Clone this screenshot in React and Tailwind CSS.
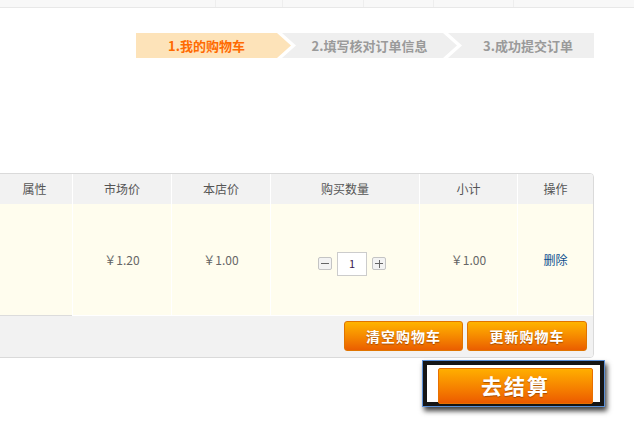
export default function App() {
  const font = { fontFamily: '"Noto Sans CJK SC", "Liberation Sans", sans-serif' };

  const cols = [
    { label: '属性', value: '' },
    { label: '市场价', value: '￥1.20' },
    { label: '本店价', value: '￥1.00' },
    { label: '购买数量', value: 'qty' },
    { label: '小计', value: '￥1.00' },
    { label: '操作', value: 'del' },
  ];

  return (
    <div className="w-[634px] h-[424px] bg-white overflow-hidden" style={font}>
      {/* top strip */}
      <div className="h-[8px] bg-[#f8f8f8] border-b border-[#e8e8e8] flex">
        <div className="w-[216px] border-r border-[#eeeeee]" />
        <div className="w-[67px] border-r border-[#eeeeee]" />
        <div className="w-[81px] border-r border-[#eeeeee]" />
        <div className="w-[70px] border-r border-[#eeeeee]" />
        <div className="w-[80px] border-r border-[#eeeeee]" />
      </div>

      {/* steps */}
      <div className="flex justify-end pr-[40px] mt-[25px]">
        <div className="flex h-[25px] w-[458px]">
          <div className="w-[155px] shrink-0 bg-[#fde3b9] pr-[14px] flex items-center justify-center text-[13px] font-bold text-[#ff6a00] [clip-path:polygon(0_0,141px_0,100%_50%,141px_100%,0_100%)]">
            1.我的购物车
          </div>
          <div className="w-[175px] shrink-0 ml-[-9px] bg-[#efefef] px-[14px] flex items-center justify-center text-[13px] font-bold text-[#9a9a9a] [clip-path:polygon(0_0,161px_0,100%_50%,161px_100%,0_100%,14px_50%)]">
            2.填写核对订单信息
          </div>
          <div className="flex-1 ml-[-9px] bg-[#efefef] pl-[14px] flex items-center justify-center text-[13px] font-bold text-[#9a9a9a] [clip-path:polygon(0_0,100%_0,100%_100%,0_100%,14px_50%)]">
            3.成功提交订单
          </div>
        </div>
      </div>

      {/* cart table */}
      <div className="ml-[-4px] mt-[115px] w-[598px] border border-[#dadada] rounded-r-[4px] overflow-hidden">
        <div className="grid grid-cols-[75px_99px_99px_149px_98px_76px]">
          {cols.map((c, i) => (
            <div
              key={c.label}
              className={`h-[30px] bg-[#f2f2f2] flex items-center justify-center text-[12px] text-[#555] ${i > 0 ? 'border-l border-white' : ''}`}
            >
              {c.label}
            </div>
          ))}
          {cols.map((c, i) => (
            <div
              key={c.label + 'v'}
              className={`h-[112px] bg-[#fffdee] border-b border-[#dcdcdc] flex items-center justify-center text-[12px] text-[#666] ${i > 0 ? 'border-l border-white' : ''}`}
            >
              {c.value === 'qty' ? (
                <div className="flex items-center gap-[5px] mt-[8px] ml-[14px]">
                  <span className="w-[14px] h-[13px] border border-[#c4c4c4] bg-[#f3f3f3] rounded-[2px] flex items-center justify-center">
                    <span className="w-[8px] h-[1px] bg-[#666]" />
                  </span>
                  <span className="w-[30px] h-[24px] border border-[#cccccc] bg-white flex items-center justify-center text-[11px] text-[#3a2050]">
                    1
                  </span>
                  <span className="w-[14px] h-[13px] border border-[#c4c4c4] bg-[#f3f3f3] rounded-[2px] flex items-center justify-center relative">
                    <span className="w-[8px] h-[1px] bg-[#666]" />
                    <span className="absolute w-[1px] h-[8px] bg-[#666]" />
                  </span>
                </div>
              ) : c.value === 'del' ? (
                <span className="text-[#0e4f8e]">删除</span>
              ) : (
                c.value
              )}
            </div>
          ))}
        </div>
        <div className="h-[41px] bg-[#f2f2f2] flex justify-end items-start gap-[4px] pt-[5px] pr-[6px]">
          <button className="w-[119px] h-[30px] rounded-[3px] border border-[#e07400] bg-gradient-to-b from-[#ffb400] to-[#ea5d00] text-white text-[14px] font-bold tracking-[1px] [text-shadow:0_1px_1px_rgba(120,50,0,0.6)]">
            清空购物车
          </button>
          <button className="w-[120px] h-[30px] rounded-[3px] border border-[#e07400] bg-gradient-to-b from-[#ffb400] to-[#ea5d00] text-white text-[14px] font-bold tracking-[1px] [text-shadow:0_1px_1px_rgba(120,50,0,0.6)]">
            更新购物车
          </button>
        </div>
      </div>

      {/* checkout */}
      <div className="flex justify-end pr-[29px] mt-[2px]">
        <div className="w-[183px] h-[47px] border border-[#5b8fd6] pl-[15px] pr-[11px] pt-[7px] shadow-[inset_0_0_0_4px_#151515,2px_4px_5px_rgba(0,0,0,0.75)]">
          <button className="w-full h-[36px] rounded-[2px] border border-[#e87000] bg-gradient-to-b from-[#ffae00] to-[#ec5a00] text-white text-[21px] font-bold tracking-[2px] [text-shadow:0_1px_1px_rgba(120,50,0,0.6)] flex items-center justify-center">
            去结算
          </button>
        </div>
      </div>
    </div>
  );
}
